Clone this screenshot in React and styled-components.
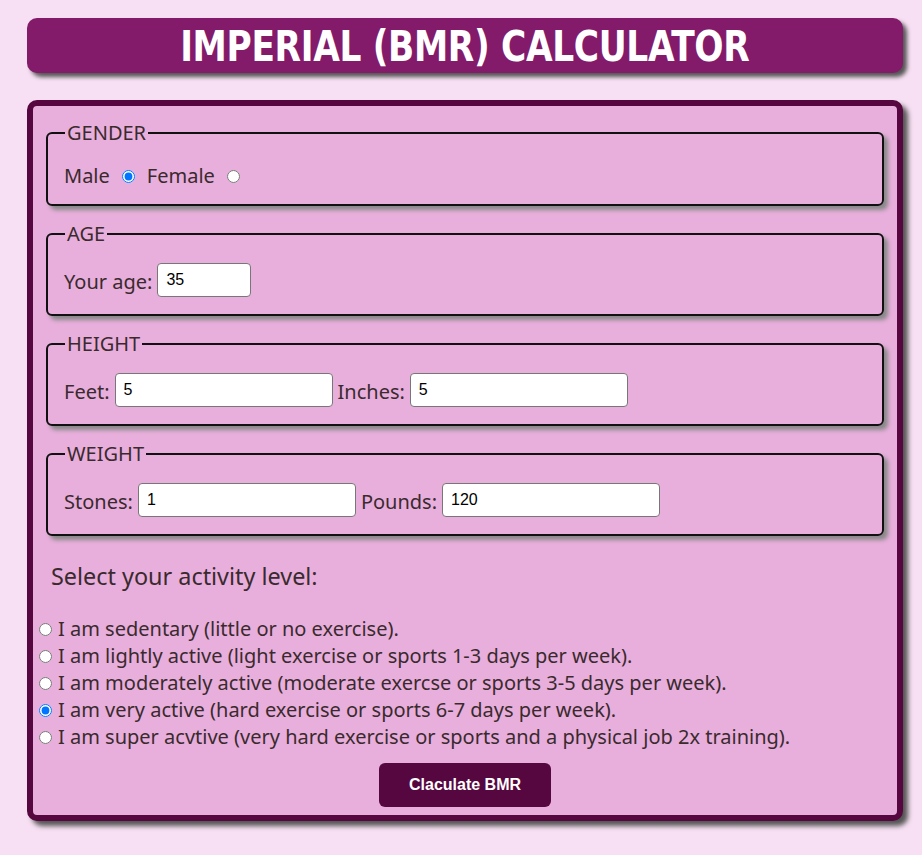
import React, { useState } from 'react';
import styled, { createGlobalStyle } from 'styled-components';

const GlobalStyle = createGlobalStyle`
  body {
    margin: 0;
    background: #f7e0f3;
    font-family: "Noto Sans", sans-serif;
    font-size: 20px;
    color: #3a2a2e;
  }
`;

const Page = styled.div`
  padding: 18px 19px 30px 27px;
  display: flex;
  flex-direction: column;
  gap: 27px;
`;

const Header = styled.h1`
  margin: 0;
  height: 55px;
  background: #831a6a;
  border-radius: 10px;
  box-shadow: 4px 4px 4px #555;
  color: #fff;
  text-align: center;
  font-family: "DejaVu Sans Condensed", "DejaVu Sans", sans-serif;
  font-stretch: condensed;
  font-weight: bold;
  font-size: 43px;
  line-height: 57px;
`;

const Title = styled.span`
  display: inline-block;
  transform: scaleX(0.89);
  letter-spacing: -0.4px;
`;

const Panel = styled.form`
  background: #e8afdc;
  border: 6px solid #56073f;
  border-radius: 10px;
  box-shadow: 5px 5px 5px #555;
  padding: 13px 0 8px 0;
  display: flex;
  flex-direction: column;
`;

const Fieldset = styled.fieldset`
  margin: 0 13px 14px 13px;
  border: 2px solid #111;
  border-radius: 6px;
  box-shadow: 4px 4px 4px #888;
  padding: 16px 16px 15px 16px;
`;

const Legend = styled.legend`
  margin-left: 1px;
  padding: 0 2px;
`;

const Row = styled.div`
  display: flex;
  align-items: center;
`;

const Label = styled.label`
  margin-right: 5px;
`;

const Radio = styled.input`
  width: 13px;
  height: 13px;
  margin: 1px 12px 0 7px;
`;

const Field = styled.input`
  width: ${({ $w }) => $w}px;
  height: 34px;
  box-sizing: border-box;
  border: 1px solid #777;
  border-radius: 4px;
  padding: 2px 8px;
  font-family: "Liberation Sans", Arial, sans-serif;
  font-size: 16px;
  margin: 0 5px 2px 0;
  color: #000;
`;

const Heading = styled.h3`
  margin: 10px 0 23px 18px;
  font-weight: normal;
  font-size: 23.4px;
`;

const Options = styled.div`
  display: flex;
  flex-direction: column;
  line-height: 27px;
`;

const Option = styled.label`
  display: flex;
  align-items: center;
`;

const OptionRadio = styled.input`
  width: 13px;
  height: 13px;
  margin: 1px 6px 0 6px;
`;

const Button = styled.button`
  align-self: center;
  margin: 13px 0 0 0;
  width: 172px;
  height: 44px;
  background: #56073f;
  border: none;
  border-radius: 6px;
  color: #fff;
  font-family: "Liberation Sans", Arial, sans-serif;
  font-weight: bold;
  font-size: 16px;
`;

const activities = [
  'I am sedentary (little or no exercise).',
  'I am lightly active (light exercise or sports 1-3 days per week).',
  'I am moderately active (moderate exercse or sports 3-5 days per week).',
  'I am very active (hard exercise or sports 6-7 days per week).',
  'I am super acvtive (very hard exercise or sports and a physical job 2x training).',
];

export default function App() {
  const [gender, setGender] = useState('male');
  const [activity, setActivity] = useState(3);
  const [age, setAge] = useState('35');
  const [feet, setFeet] = useState('5');
  const [inches, setInches] = useState('5');
  const [stones, setStones] = useState('1');
  const [pounds, setPounds] = useState('120');

  return (
    <>
      <GlobalStyle />
      <Page>
        <Header><Title>IMPERIAL (BMR) CALCULATOR</Title></Header>
        <Panel onSubmit={(e) => e.preventDefault()}>
          <Fieldset>
            <Legend>GENDER</Legend>
            <Row>
              <Label>Male</Label>
              <Radio type="radio" name="gender" checked={gender === 'male'} onChange={() => setGender('male')} />
              <Label>Female</Label>
              <Radio type="radio" name="gender" checked={gender === 'female'} onChange={() => setGender('female')} />
            </Row>
          </Fieldset>
          <Fieldset>
            <Legend>AGE</Legend>
            <Row>
              <Label>Your age:</Label>
              <Field $w={94} value={age} onChange={(e) => setAge(e.target.value)} />
            </Row>
          </Fieldset>
          <Fieldset>
            <Legend>HEIGHT</Legend>
            <Row>
              <Label>Feet:</Label>
              <Field $w={218} value={feet} onChange={(e) => setFeet(e.target.value)} />
              <Label>Inches:</Label>
              <Field $w={218} value={inches} onChange={(e) => setInches(e.target.value)} />
            </Row>
          </Fieldset>
          <Fieldset>
            <Legend>WEIGHT</Legend>
            <Row>
              <Label>Stones:</Label>
              <Field $w={218} value={stones} onChange={(e) => setStones(e.target.value)} />
              <Label>Pounds:</Label>
              <Field $w={218} value={pounds} onChange={(e) => setPounds(e.target.value)} />
            </Row>
          </Fieldset>
          <Heading>Select your activity level:</Heading>
          <Options>
            {activities.map((text, i) => (
              <Option key={i}>
                <OptionRadio type="radio" name="activity" checked={activity === i} onChange={() => setActivity(i)} />
                {text}
              </Option>
            ))}
          </Options>
          <Button type="submit">Claculate BMR</Button>
        </Panel>
      </Page>
    </>
  );
}
